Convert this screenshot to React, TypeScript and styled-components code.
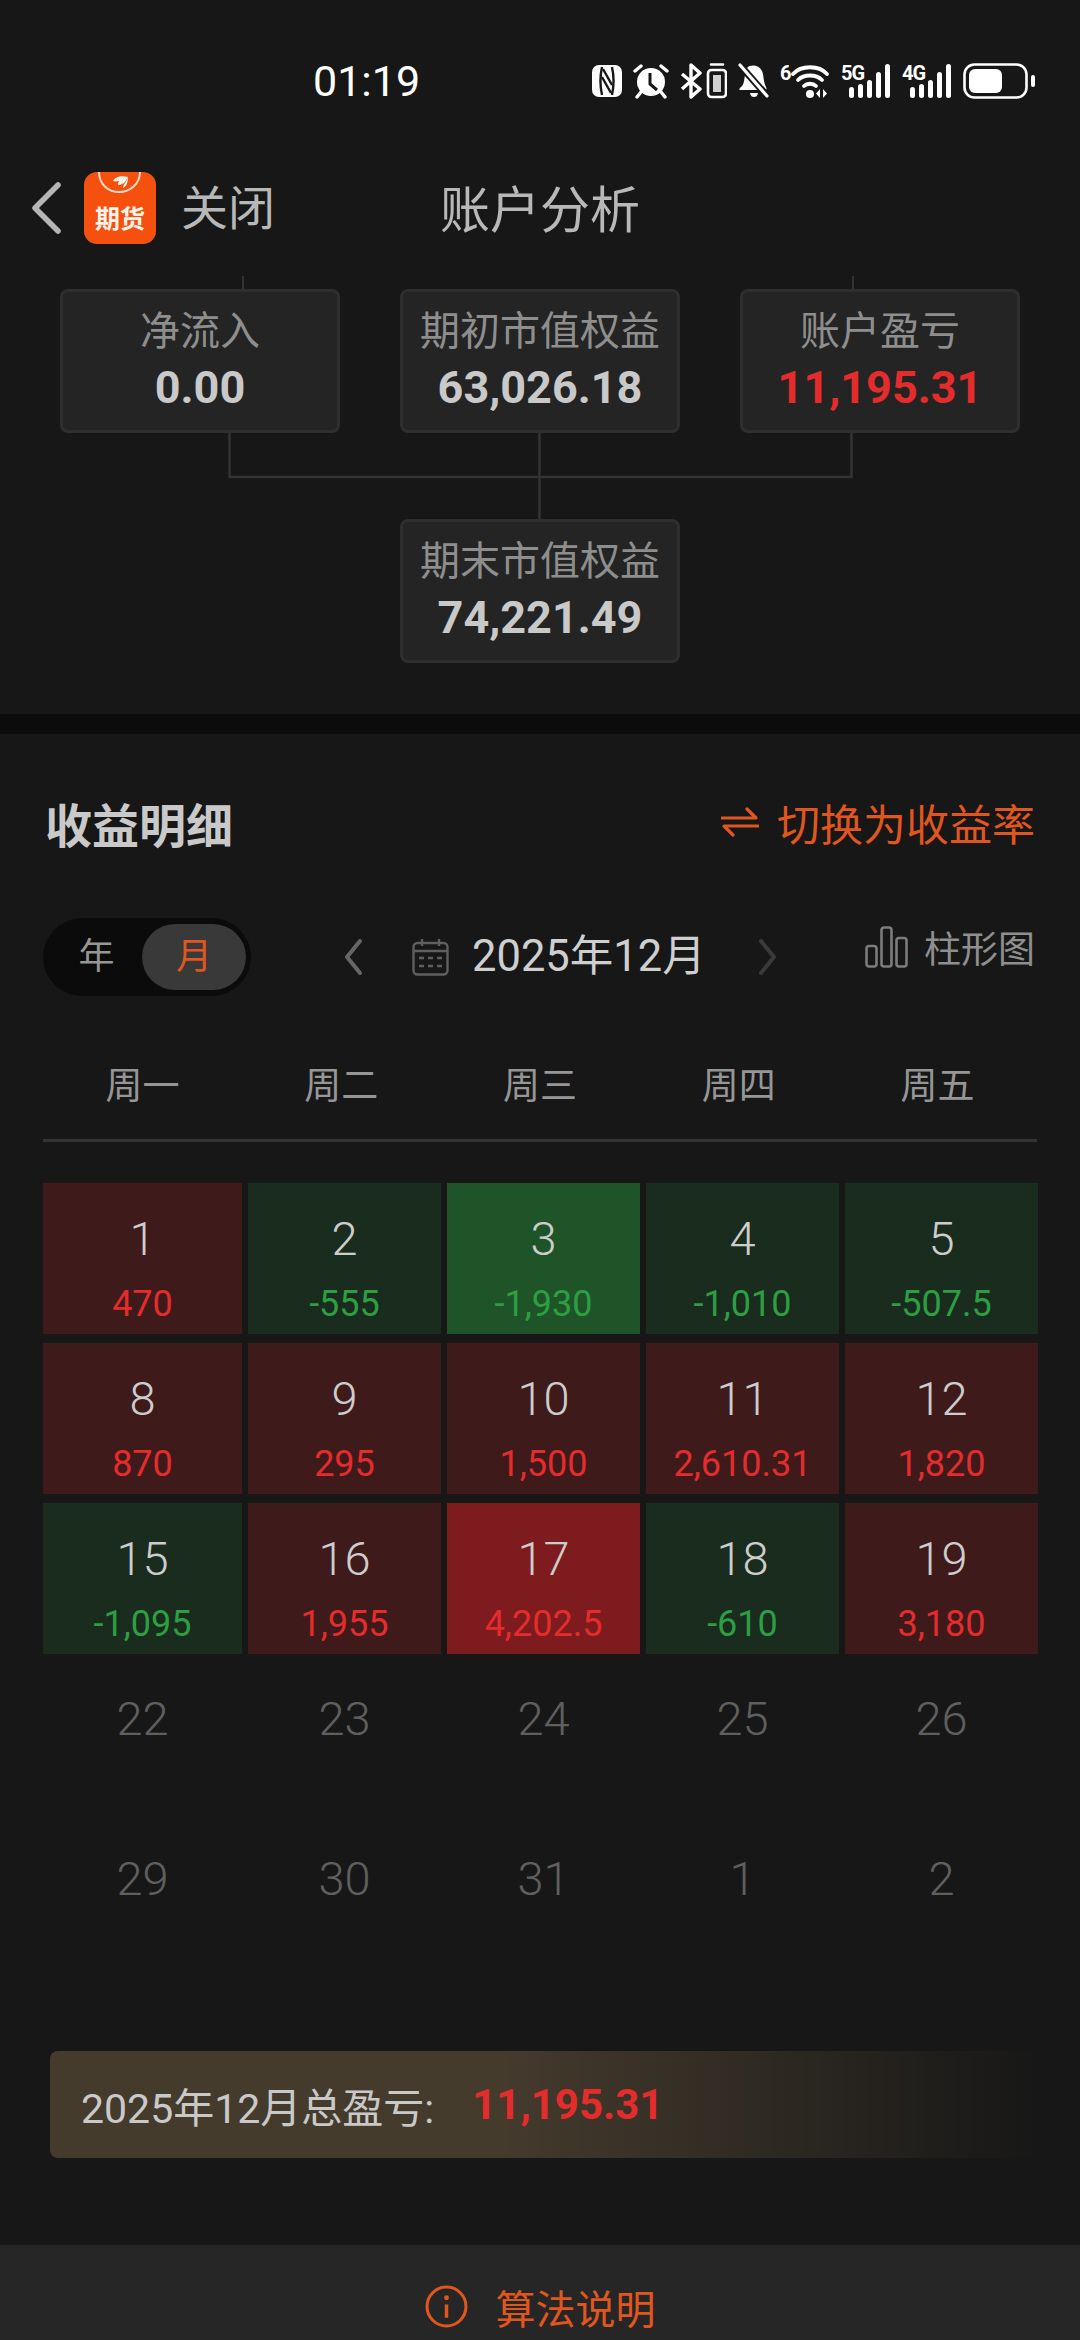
import React from 'react';
import styled, { createGlobalStyle } from 'styled-components';

const ORANGE = '#e0561f';
const RED = '#e42c2c';
const GREEN = '#2c9f42';

const GlobalStyle = createGlobalStyle`
  html, body {
    margin: 0;
    padding: 0;
    background: #171717;
  }
  body {
    font-family: Roboto, "Noto Sans CJK SC", sans-serif;
  }
  * {
    box-sizing: border-box;
  }
`;

const Page = styled.div`
  width: 1080px;
  height: 2340px;
  display: flex;
  flex-direction: column;
  overflow: hidden;
  background: #171717;
`;

const StatusBar = styled.div`
  height: 120px;
  padding: 61px 45px 0 313px;
  display: flex;
  align-items: flex-start;
  justify-content: space-between;
`;

const Clock = styled.div`
  font-size: 43px;
  line-height: 40px;
  font-weight: 400;
  color: #fff;
`;

const StatusIcons = styled.div`
  display: flex;
  align-items: center;
  gap: 11px;
  height: 40px;
`;

const NavBar = styled.div`
  height: 156px;
  padding: 52px 0 32px 30px;
  display: flex;
  align-items: center;
  position: relative;
`;

const BackButton = styled.div`
  width: 54px;
  display: flex;
`;

const LogoTile = styled.div`
  width: 72px;
  height: 72px;
  border-radius: 13px;
  background: #f5500d;
  overflow: hidden;
  display: flex;
  flex-direction: column;
  align-items: center;
`;

const LogoText = styled.span`
  font-size: 25px;
  line-height: 25px;
  font-weight: 700;
  color: #fff3ea;
  margin-top: 8px;
`;

const CloseLabel = styled.span`
  margin: 2px 0 0 25px;
  font-size: 47px;
  line-height: 60px;
  color: #b8b8b8;
`;

const NavTitle = styled.span`
  position: absolute;
  left: 0;
  right: 0;
  top: 55px;
  text-align: center;
  font-size: 50px;
  line-height: 72px;
  color: #b8b8b8;
`;

const TreeSection = styled.section`
  height: 438px;
  display: flex;
  flex-direction: column;
  align-items: center;
`;

const TreeLines = styled.svg`
  display: block;
  flex: none;
`;

const TreeRow = styled.div`
  display: flex;
  gap: 60px;
`;

const TreeNode = styled.div`
  width: 280px;
  height: 144px;
  padding-top: 15px;
  border: 3px solid #2e2e2e;
  border-radius: 8px;
  background: #242424;
  display: flex;
  flex-direction: column;
  align-items: center;
`;

const NodeLabel = styled.div`
  font-size: 40px;
  line-height: 50px;
  color: #8e8e8e;
`;

const NodeValue = styled.div<{ $red?: boolean }>`
  margin-top: 5px;
  font-size: 45px;
  line-height: 52px;
  font-weight: 700;
  color: ${(props) => (props.$red ? RED : '#c9c9c9')};
`;

const Band = styled.div`
  height: 20px;
  flex: none;
  background: #0c0c0c;
`;

const Detail = styled.section`
  flex: 1;
  padding: 61px 43px 0;
  display: flex;
  flex-direction: column;
`;

const DetailHeader = styled.div`
  height: 54px;
  margin-bottom: 6px;
  display: flex;
  align-items: center;
  justify-content: space-between;
  padding-left: 2px;
`;

const DetailTitle = styled.h2`
  margin: 0;
  font-size: 47px;
  font-weight: 700;
  color: #c9c9c9;
`;

const SwitchLink = styled.div`
  display: flex;
  align-items: center;
  gap: 18px;
  padding-right: 2px;
  font-size: 43px;
  color: ${ORANGE};
`;

const Toolbar = styled.div`
  margin-top: 63px;
  height: 78px;
  display: flex;
  align-items: center;
`;

const PeriodToggle = styled.div`
  width: 208px;
  height: 78px;
  padding: 6px 5px 6px 0;
  border-radius: 39px;
  background: #0b0b0b;
  display: flex;
  align-items: center;
`;

const PeriodOption = styled.div<{ $active?: boolean }>`
  width: ${(props) => (props.$active ? '104px' : '99px')};
  height: 66px;
  padding-left: ${(props) => (props.$active ? '0' : '8px')};
  border-radius: 33px;
  font-size: 36px;
  line-height: 66px;
  text-align: center;
  color: ${(props) => (props.$active ? ORANGE : '#969696')};
  background: ${(props) => (props.$active ? '#393939' : 'transparent')};
`;

const MonthNav = styled.div`
  margin-left: 92px;
  display: flex;
  align-items: center;
`;

const MonthSpacer = styled.span`
  width: 49px;
  flex: none;
`;

const MonthLabel = styled.span`
  margin: 0 52px 0 23px;
  font-size: 43.5px;
  line-height: 60px;
  color: #cfcfcf;
  white-space: nowrap;
`;

const ChartLink = styled.div`
  margin: 0 2px 20px auto;
  display: flex;
  align-items: center;
  gap: 16px;
  font-size: 37px;
  color: #8f8f8f;
`;

const WeekHeader = styled.div`
  margin-top: 61px;
  padding-bottom: 22px;
  height: 85px;
  border-bottom: 3px solid #333;
  display: grid;
  grid-template-columns: repeat(5, 1fr);
  align-items: center;
`;

const WeekDay = styled.div`
  text-align: center;
  font-size: 37px;
  line-height: 60px;
  color: #969696;
`;

const CalendarGrid = styled.div`
  margin-top: 41px;
  display: grid;
  grid-template-columns: 199px repeat(4, 193px);
  grid-auto-rows: 151px;
  gap: 9px 6px;
`;

type Tone = 'up' | 'down' | 'strongUp' | 'strongDown' | 'none';

const toneColor: Record<Tone, string> = {
  up: '#3f1a1b',
  down: '#1a2c1e',
  strongUp: '#7d1b1e',
  strongDown: '#1e5428',
  none: 'transparent',
};

const DayCell = styled.div<{ $tone: Tone }>`
  padding-top: 31px;
  display: flex;
  flex-direction: column;
  align-items: center;
  background: ${(props) => toneColor[props.$tone]};
`;

const DayNumber = styled.div<{ $muted?: boolean }>`
  font-size: 47px;
  line-height: 50px;
  font-weight: 300;
  color: ${(props) => (props.$muted ? '#5f5f5f' : '#cdcdcd')};
`;

const DayProfit = styled.div<{ $loss?: boolean }>`
  margin-top: 20px;
  font-size: 36px;
  line-height: 40px;
  color: ${(props) => (props.$loss ? GREEN : RED)};
`;

const SummaryBar = styled.div`
  margin: 77px -3px 0 7px;
  height: 107px;
  padding-left: 31px;
  border-radius: 8px;
  display: flex;
  align-items: center;
  background: linear-gradient(90deg, #453b2d 0%, #453b2d 45%, #171717 100%);
`;

const SummaryLabel = styled.span`
  font-size: 41px;
  color: #c9c9c9;
`;

const SummaryValue = styled.span`
  margin-left: 38px;
  font-size: 42px;
  font-weight: 700;
  color: ${RED};
`;

const Footer = styled.div`
  height: 95px;
  flex: none;
  padding-top: 28px;
  background: #262626;
  display: flex;
  align-items: center;
  justify-content: center;
  gap: 28px;
  font-size: 40px;
  color: ${ORANGE};
`;

const SvgGlyph = styled.svg`
  display: block;
  flex: none;
`;

const BackIcon = () => (
  <SvgGlyph width="32" height="54" viewBox="0 0 32 54" fill="none">
    <path d="M28 4 5 27l23 23" stroke="#b5b5b5" strokeWidth="5.5" strokeLinecap="round" strokeLinejoin="round" />
  </SvgGlyph>
);

const NfcIcon = () => (
  <SvgGlyph width="30" height="34" viewBox="0 0 30 34" fill="none">
    <rect x="0" y="1" width="30" height="32" rx="7" fill="#fff" />
    <path d="M10 3c-2 9-2 19 0 28M20 3c2 9 2 19 0 28" stroke="#171717" strokeWidth="2.4" />
    <path d="M11 5 20 21M10 13 19 29" stroke="#171717" strokeWidth="2.4" />
  </SvgGlyph>
);

const AlarmIcon = () => (
  <SvgGlyph width="36" height="36" viewBox="0 0 36 36" fill="none">
    <circle cx="18" cy="19" r="14" fill="#fff" />
    <path d="M17 10v11l7 6" stroke="#171717" strokeWidth="3" />
    <path d="M2 8 8 3M34 8 28 3M8 29l-4 5M28 29l4 5" stroke="#fff" strokeWidth="3.4" strokeLinecap="round" />
  </SvgGlyph>
);

const BluetoothVibrateIcon = () => (
  <SvgGlyph width="47" height="36" viewBox="0 0 47 36" fill="none">
    <path d="M2 11 20 26 11 34V2l9 8L2 26" stroke="#fff" strokeWidth="3.4" strokeLinejoin="round" />
    <rect x="28" y="7" width="18" height="27" rx="3.500" stroke="#fff" strokeWidth="2.600" />
    <rect x="33" y="12" width="8" height="17" fill="#fff" opacity="0.8" />
    <path d="M31 1.500h12" stroke="#fff" strokeWidth="2.600" strokeLinecap="round" />
  </SvgGlyph>
);

const BellOffIcon = () => (
  <SvgGlyph width="31" height="36" viewBox="0 0 31 36" fill="none">
    <path d="M9 5c4-4 12-3 15 3 2 4 1 10 4 16 .8 1.600 1 3-1 3H2c-2 0 0-2 2-4 3-3 2-12 5-18z" fill="#fff" />
    <path d="M12 30h8c-.6 3-2 4-4 4s-3.400-1-4-4z" fill="#fff" />
    <path d="M1 1l29 33" stroke="#171717" strokeWidth="7" />
    <path d="M2 2l27 31" stroke="#fff" strokeWidth="3.200" strokeLinecap="round" />
  </SvgGlyph>
);

const WifiIcon = () => (
  <SvgGlyph width="50" height="40" viewBox="0 0 50 40" fill="none">
    <text x="0" y="19" fontFamily="Roboto, sans-serif" fontWeight="700" fontSize="20" fill="#fff">6</text>
    <path d="M13 13C21 4 39 4 47 13M18 19c6-6 18-6 24 0M24 25c3-3 9-3 12 0" stroke="#fff" strokeWidth="3.800" strokeLinecap="round" />
    <circle cx="30" cy="33" r="4" fill="#fff" />
    <path d="M40 28v9l-4-4.500zM43 28v9l4-4.500z" fill="#fff" />
  </SvgGlyph>
);

const SignalIcon = ({ label }: { label: string }) => (
  <SvgGlyph width="50" height="40" viewBox="0 0 50 40" fill="none">
    <text x="0" y="19" fontFamily="Roboto, sans-serif" fontWeight="700" fontSize="20" letterSpacing="-1" fill="#fff">{label}</text>
    {[
      { x: 8, y: 26 },
      { x: 17, y: 23 },
      { x: 26, y: 19 },
      { x: 35, y: 11 },
      { x: 44, y: 3 },
    ].map((bar) => (
      <rect key={bar.x} x={bar.x} y={bar.y} width="5" height={37 - bar.y} rx="2.500" fill="#fff" />
    ))}
  </SvgGlyph>
);

const BatteryIcon = () => (
  <SvgGlyph width="72" height="36" viewBox="0 0 72 36" fill="none">
    <rect x="1.500" y="1.500" width="62" height="33" rx="10" stroke="#fff" strokeWidth="2.600" />
    <rect x="6" y="6" width="33" height="24" rx="6" fill="#fff" />
    <rect x="68" y="12" width="4" height="12" rx="2" fill="#fff" />
  </SvgGlyph>
);

const LogoMark = () => (
  <SvgGlyph width="72" height="27" viewBox="0 0 72 27" fill="none">
    <path d="M15 0c0 12 9 20 20 20S56 12 56 0" stroke="#ffdcc8" strokeWidth="2" />
    <path d="M44 5C37 3 31 5 29 9c3 1 6 0 8-1zM44 5c-4 2-8 3-9 4-1 1-1 3-1 4 3 0 6-2 7-3zM44 5c-1 3-2 4-3 6-1 1-2 3-2 5 3-1 5-5 5-11z" fill="#fff3ea" />
  </SvgGlyph>
);

const SwapIcon = () => (
  <SvgGlyph width="38" height="30" viewBox="0 0 38 30" fill="none">
    <path d="M1 11h34L26 2M37 19H3l9 9" stroke={ORANGE} strokeWidth="3.200" strokeLinecap="round" strokeLinejoin="round" />
  </SvgGlyph>
);

const Chevron = ({ flip, color }: { flip?: boolean; color: string }) => (
  <SvgGlyph width="20" height="36" viewBox="0 0 20 36" fill="none" style={flip ? { transform: 'scaleX(-1)' } : undefined}>
    <path d="M17 2 4 18l13 16" stroke={color} strokeWidth="4" strokeLinecap="round" strokeLinejoin="round" />
  </SvgGlyph>
);

const CalendarIcon = () => (
  <SvgGlyph width="37" height="38" viewBox="0 0 37 38" fill="none" stroke="#5f5f5f">
    <rect x="1.500" y="5" width="34" height="31.500" rx="4" strokeWidth="2.400" />
    <path d="M1.500 13h34M10 1v7M27 1v7" strokeWidth="2.400" />
    <path d="M7 20h5M16 20h5M25 20h5M7 28h5M16 28h5M25 28h5" strokeWidth="2.600" />
  </SvgGlyph>
);

const BarsIcon = () => (
  <SvgGlyph width="43" height="42" viewBox="0 0 43 42" fill="none" stroke="#7c7c7c" strokeWidth="2.600">
    <rect x="1.500" y="20" width="10" height="20.500" rx="2.500" />
    <rect x="16.500" y="1.500" width="10" height="39" rx="2.500" />
    <rect x="31.500" y="12" width="10" height="28.500" rx="2.500" />
  </SvgGlyph>
);

const InfoIcon = () => (
  <SvgGlyph width="43" height="43" viewBox="0 0 42 42" fill="none">
    <circle cx="21" cy="21" r="19" stroke={ORANGE} strokeWidth="3" />
    <circle cx="21" cy="12.500" r="2.400" fill={ORANGE} />
    <path d="M21 19v13" stroke={ORANGE} strokeWidth="3.400" />
  </SvgGlyph>
);

const topNodes = [
  { label: '净流入', value: '0.00' },
  { label: '期初市值权益', value: '63,026.18' },
  { label: '账户盈亏', value: '11,195.31', red: true },
];

const weekDays = ['周一', '周二', '周三', '周四', '周五'];

const days: { day: number; profit?: string; tone: Tone }[] = [
  { day: 1, profit: '470', tone: 'up' },
  { day: 2, profit: '-555', tone: 'down' },
  { day: 3, profit: '-1,930', tone: 'strongDown' },
  { day: 4, profit: '-1,010', tone: 'down' },
  { day: 5, profit: '-507.5', tone: 'down' },
  { day: 8, profit: '870', tone: 'up' },
  { day: 9, profit: '295', tone: 'up' },
  { day: 10, profit: '1,500', tone: 'up' },
  { day: 11, profit: '2,610.31', tone: 'up' },
  { day: 12, profit: '1,820', tone: 'up' },
  { day: 15, profit: '-1,095', tone: 'down' },
  { day: 16, profit: '1,955', tone: 'up' },
  { day: 17, profit: '4,202.5', tone: 'strongUp' },
  { day: 18, profit: '-610', tone: 'down' },
  { day: 19, profit: '3,180', tone: 'up' },
  { day: 22, tone: 'none' },
  { day: 23, tone: 'none' },
  { day: 24, tone: 'none' },
  { day: 25, tone: 'none' },
  { day: 26, tone: 'none' },
  { day: 29, tone: 'none' },
  { day: 30, tone: 'none' },
  { day: 31, tone: 'none' },
  { day: 1, tone: 'none' },
  { day: 2, tone: 'none' },
];

const App: React.FC = () => {
  return (
    <Page>
      <GlobalStyle />
      <StatusBar>
        <Clock>01:19</Clock>
        <StatusIcons>
          <NfcIcon />
          <AlarmIcon />
          <BluetoothVibrateIcon />
          <BellOffIcon />
          <WifiIcon />
          <SignalIcon label="5G" />
          <SignalIcon label="4G" />
          <BatteryIcon />
        </StatusIcons>
      </StatusBar>

      <NavBar>
        <BackButton>
          <BackIcon />
        </BackButton>
        <LogoTile>
          <LogoMark />
          <LogoText>期货</LogoText>
        </LogoTile>
        <CloseLabel>关闭</CloseLabel>
        <NavTitle>账户分析</NavTitle>
      </NavBar>

      <TreeSection>
        <TreeLines width="1080" height="13" viewBox="0 0 1080 13">
          <path d="M243 0v13M853 0v13" stroke="#333" strokeWidth="2" />
        </TreeLines>
        <TreeRow>
          {topNodes.map((node) => (
            <TreeNode key={node.label}>
              <NodeLabel>{node.label}</NodeLabel>
              <NodeValue $red={node.red}>{node.value}</NodeValue>
            </TreeNode>
          ))}
        </TreeRow>
        <TreeLines width="1080" height="86" viewBox="0 0 1080 86">
          <path d="M229.500 0v44h622V0M539.500 0v86" stroke="#333" strokeWidth="2.500" fill="none" />
        </TreeLines>
        <TreeNode>
          <NodeLabel>期末市值权益</NodeLabel>
          <NodeValue>74,221.49</NodeValue>
        </TreeNode>
      </TreeSection>

      <Band />

      <Detail>
        <DetailHeader>
          <DetailTitle>收益明细</DetailTitle>
          <SwitchLink>
            <SwapIcon />
            切换为收益率
          </SwitchLink>
        </DetailHeader>

        <Toolbar>
          <PeriodToggle>
            <PeriodOption>年</PeriodOption>
            <PeriodOption $active>月</PeriodOption>
          </PeriodToggle>
          <MonthNav>
            <Chevron color="#666" />
            <MonthSpacer />
            <CalendarIcon />
            <MonthLabel>2025年12月</MonthLabel>
            <Chevron flip color="#3a3a3a" />
          </MonthNav>
          <ChartLink>
            <BarsIcon />
            柱形图
          </ChartLink>
        </Toolbar>

        <WeekHeader>
          {weekDays.map((day) => (
            <WeekDay key={day}>{day}</WeekDay>
          ))}
        </WeekHeader>

        <CalendarGrid>
          {days.map((item, index) => (
            <DayCell key={index} $tone={item.tone}>
              <DayNumber $muted={item.tone === 'none'}>{item.day}</DayNumber>
              {item.profit && <DayProfit $loss={item.profit.startsWith('-')}>{item.profit}</DayProfit>}
            </DayCell>
          ))}
        </CalendarGrid>

        <SummaryBar>
          <SummaryLabel>2025年12月总盈亏:</SummaryLabel>
          <SummaryValue>11,195.31</SummaryValue>
        </SummaryBar>
      </Detail>

      <Footer>
        <InfoIcon />
        算法说明
      </Footer>
    </Page>
  );
};

export default App;
